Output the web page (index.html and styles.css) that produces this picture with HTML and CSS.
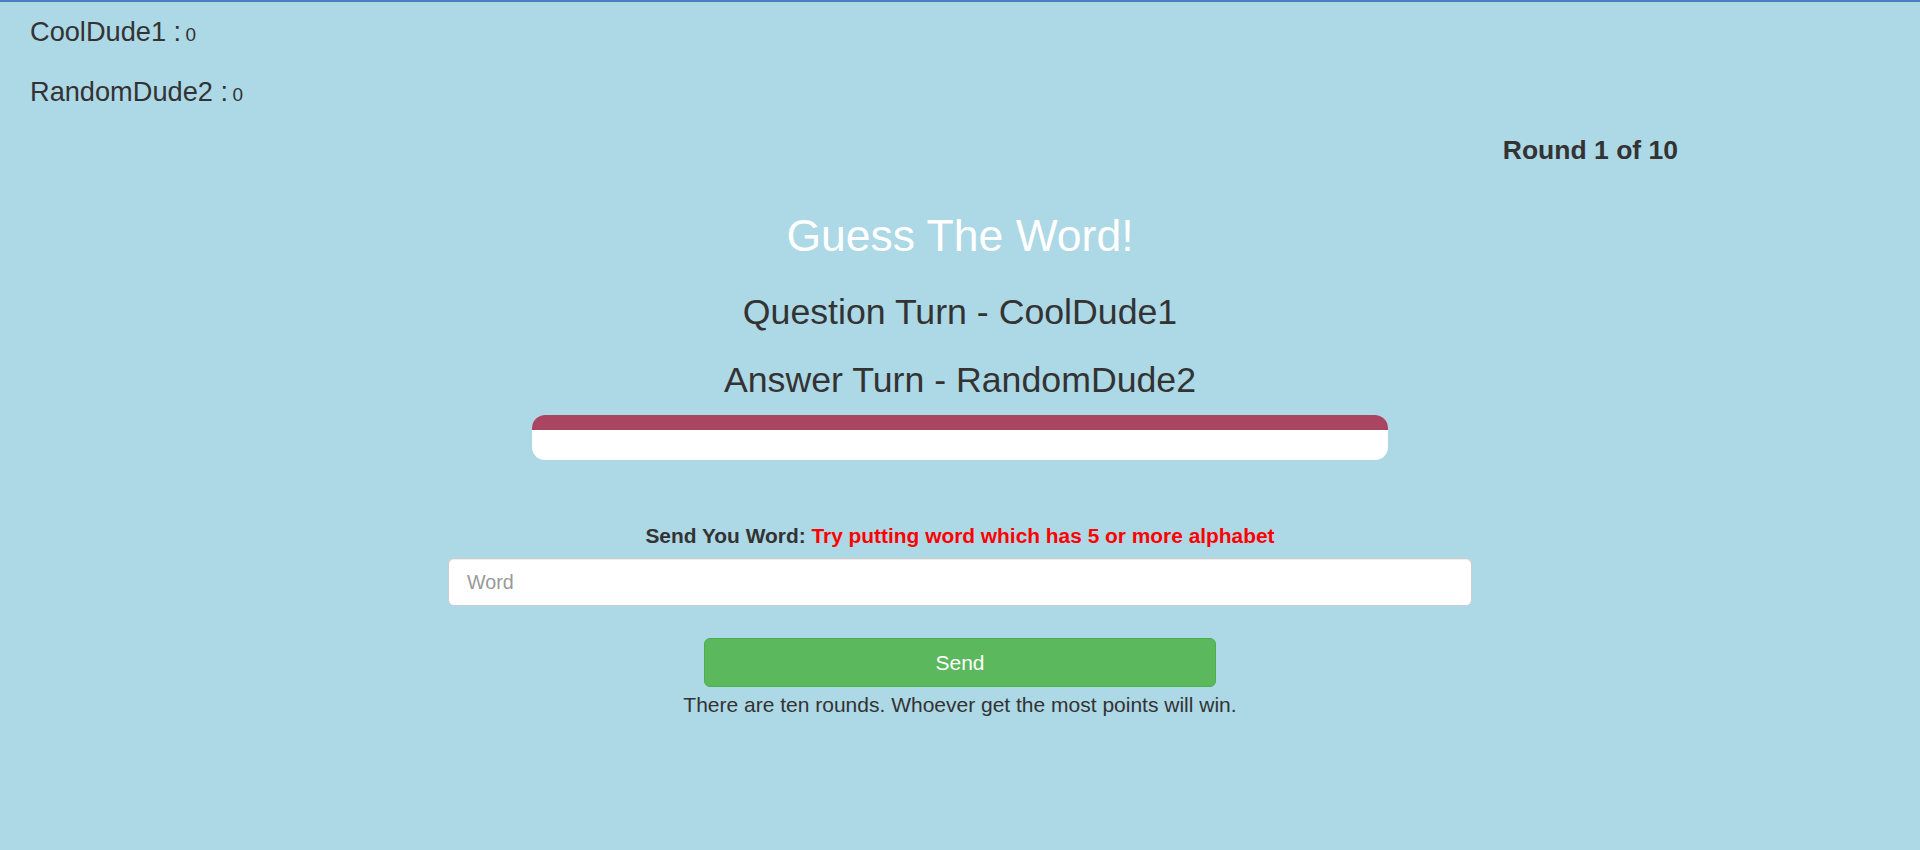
FILE: index.html
```html
<!DOCTYPE html>
<html>
<head>
<meta charset="utf-8">
<title>Guess The Word</title>
<link rel="stylesheet" href="styles.css">
</head>
<body>
<div class="page">
  <div class="scores">
    <div class="score"><span class="name">CoolDude1 :</span> <span class="points">0</span></div>
    <div class="score"><span class="name">RandomDude2 :</span> <span class="points">0</span></div>
  </div>
  <div class="round-row"><div class="round">Round 1 of 10</div></div>
  <div class="game">
    <h1 class="title">Guess The Word!</h1>
    <h2 class="turn turn-q">Question Turn - CoolDude1</h2>
    <h2 class="turn turn-a">Answer Turn - RandomDude2</h2>
    <div class="timer"><div class="timer-fill"></div></div>
    <label class="prompt" for="word">Send You Word: <span class="hint">Try putting word which has 5 or more alphabet</span></label>
    <input class="word-input" id="word" type="text" placeholder="Word">
    <button class="send-btn" type="button">Send</button>
    <p class="rules">There are ten rounds. Whoever get the most points will win.</p>
  </div>
</div>
</body>
</html>
```

FILE: styles.css
```css
html, body {
  margin: 0;
  padding: 0;
}

body {
  background: #add8e6;
  font-family: "Liberation Sans", Arial, Helvetica, sans-serif;
  color: #333333;
  min-height: 850px;
}

.page {
  border-top: 2px solid #4a7ebf;
  min-height: 848px;
  box-sizing: border-box;
}

.scores {
  padding: 15px 30px 0;
  display: flex;
  flex-direction: column;
  gap: 30px;
}

.score {
  line-height: 30px;
  height: 30px;
}

.name {
  font-size: 27.2px;
}

.points {
  font-size: 19px;
}

.round-row {
  display: flex;
  justify-content: flex-end;
  padding-right: 242px;
  margin-top: 28px;
}

.round {
  font-size: 26.5px;
  font-weight: bold;
  line-height: 30px;
}

.game {
  display: flex;
  flex-direction: column;
  align-items: center;
  text-align: center;
}

.title {
  margin: 46px 0 0;
  font-size: 44.5px;
  font-weight: normal;
  line-height: 50px;
  color: #ffffff;
}

.turn {
  margin: 0;
  font-size: 35.7px;
  font-weight: normal;
  line-height: 44px;
}

.turn-q {
  margin-top: 29px;
}

.turn-a {
  margin-top: 24px;
}

.timer {
  margin-top: 13px;
  width: 856px;
  height: 45px;
  background: #ffffff;
  border-radius: 13px;
  overflow: hidden;
}

.timer-fill {
  height: 15px;
  width: 100%;
  background: #a94561;
}

.prompt {
  margin-top: 63px;
  font-size: 20.9px;
  font-weight: bold;
  line-height: 26px;
}

.hint {
  color: #ff0000;
}

.word-input {
  margin-top: 9px;
  width: 1024px;
  height: 48px;
  box-sizing: border-box;
  border: 1px solid #cccccc;
  border-radius: 6px;
  background: #ffffff;
  padding: 0 18px;
  font-family: "Liberation Sans", Arial, Helvetica, sans-serif;
  font-size: 19.7px;
  color: #555555;
  box-shadow: inset 0 1px 1px rgba(0, 0, 0, 0.075);
}

.word-input::placeholder {
  color: #999999;
}

.send-btn {
  margin-top: 32px;
  width: 512px;
  height: 49px;
  border: 1px solid #4cae4c;
  border-radius: 6px;
  background: #5cb85c;
  color: #ffffff;
  font-family: "Liberation Sans", Arial, Helvetica, sans-serif;
  font-size: 21px;
  cursor: pointer;
}

.rules {
  margin: 6px 0 0;
  font-size: 21px;
  line-height: 24px;
}
```
